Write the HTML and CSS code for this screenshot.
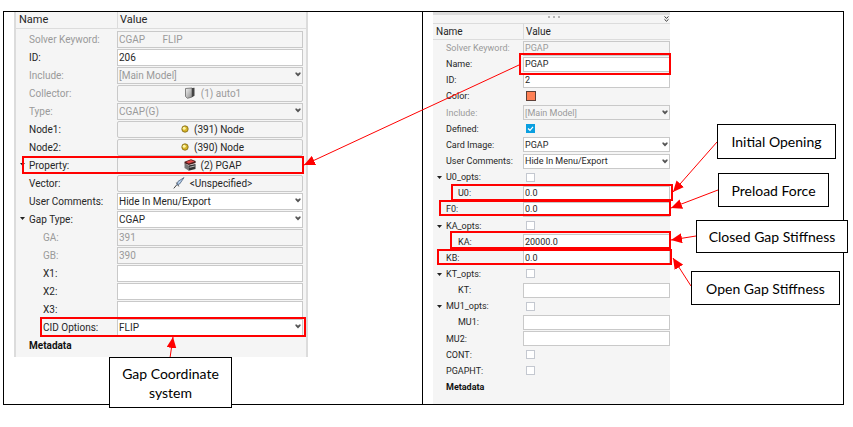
FILE: index.html
```html
<!DOCTYPE html>
<html lang="en">

<head>
    <meta charset="UTF-8">
    <meta name="viewport" content="width=device-width, initial-scale=1.0">
    <title>CGAP / PGAP</title>
    <link rel="stylesheet" href="styles.css">
</head>

<body>
    <!-- shared icons -->
    <svg class="symbols" aria-hidden="true">
        <symbol id="chevron" viewBox="0 0 6 5">
            <path d="M0.4 0.4 H1.8 L3 1.8 L4.2 0.4 H5.6 V1.8 L3 4.6 L0.4 1.8 Z" fill="#555" />
        </symbol>
        <symbol id="caret" viewBox="0 0 5 3">
            <path d="M0 0 H5 L2.5 3 Z" fill="#222" />
        </symbol>
        <symbol id="ball" viewBox="0 0 8 8">
            <circle cx="4" cy="4" r="3.2" fill="#d8b62a" stroke="#7c6414" stroke-width="0.8" />
            <circle cx="3.2" cy="3.2" r="1.5" fill="#fff6a8" />
        </symbol>
    </svg>

    <main class="stage">
        <div class="figure">
            <section class="cell">
                <form class="panel panel-gap">
                    <div class="head"><span>Name</span><span>Value</span></div>
                    <div class="rows">
                        <div class="row off"><label for="g1">Solver Keyword:</label><input id="g1" class="field keyword" value="CGAP       FLIP" disabled></div>
                        <div class="row"><label for="g2">ID:</label><input id="g2" class="field" value="206"></div>
                        <div class="row off"><label for="g3">Include:</label><span class="pick"><select id="g3" class="field" disabled><option>[Main Model]</option></select><svg><use href="#chevron" /></svg></span></div>
                        <div class="row off"><label for="g4">Collector:</label>
                            <button id="g4" type="button" class="field entity" disabled>
                                <svg class="ico" viewBox="0 0 11 12"><defs><linearGradient id="shade" x1="0" y1="0" x2="1" y2="1"><stop offset="0" stop-color="#f4f4f4" /><stop offset="1" stop-color="#8a8a8a" /></linearGradient></defs><path d="M1 1.5 L7.5 1 V10 L3 11.3 L1 9.5 Z" fill="url(#shade)" stroke="#666" stroke-width="0.8" /><path d="M7.5 1 L10 0.8 V8.8 L7.5 10.2 Z" fill="#444" /></svg>(1) auto1</button></div>
                        <div class="row off"><label for="g5">Type:</label><span class="pick"><select id="g5" class="field" disabled><option>CGAP(G)</option></select><svg><use href="#chevron" /></svg></span></div>
                        <div class="row"><label for="g6">Node1:</label><button id="g6" type="button" class="field entity"><svg class="dot"><use href="#ball" /></svg>(391) Node</button></div>
                        <div class="row"><label for="g7">Node2:</label><button id="g7" type="button" class="field entity"><svg class="dot"><use href="#ball" /></svg>(390) Node</button></div>
                        <div class="row"><svg class="caret"><use href="#caret" /></svg><label for="g8">Property:</label>
                            <button id="g8" type="button" class="field entity">
                                <svg class="ico" viewBox="0 0 12 12"><path d="M0.5 4 L4.5 6.5 V11.5 L0.5 9 Z" fill="#777" /><path d="M4.5 6.5 L11.5 5 V10 L4.5 11.7 Z" fill="#333" /><path d="M0.5 2.8 L7 0.3 L11.6 2 L11.6 4 L4.8 6 L0.5 4.2 Z" fill="#4a1c1c" /><path d="M1.8 2.9 L7 1 L10.6 2.4 L4.8 4.4 Z" fill="#e04a48" /><path d="M5.5 8.3 L10.8 7" stroke="#ccc" stroke-width="0.9" /></svg>(2) PGAP</button></div>
                        <div class="row"><label for="g9">Vector:</label>
                            <button id="g9" type="button" class="field entity">
                                <svg class="ico" viewBox="0 0 12 12"><path d="M0.8 11.4 L3.6 8 M3.4 5.6 L5.8 9.4" stroke="#444" stroke-width="1" fill="none" /><path d="M11 0.6 L5 4.4 L3.8 8 L6.8 6.8 Z" fill="#b8d2ee" stroke="#4a5f7c" stroke-width="0.8" /></svg>&lt;Unspecified&gt;</button></div>
                        <div class="row"><label for="g10">User Comments:</label><span class="pick"><select id="g10" class="field"><option>Hide In Menu/Export</option></select><svg><use href="#chevron" /></svg></span></div>
                        <div class="row"><svg class="caret"><use href="#caret" /></svg><label for="g11">Gap Type:</label><span class="pick"><select id="g11" class="field"><option>CGAP</option></select><svg><use href="#chevron" /></svg></span></div>
                        <div class="row sub off"><label for="g12">GA:</label><input id="g12" class="field" value="391" disabled></div>
                        <div class="row sub off"><label for="g13">GB:</label><input id="g13" class="field" value="390" disabled></div>
                        <div class="row sub"><label for="g14">X1:</label><input id="g14" class="field"></div>
                        <div class="row sub"><label for="g15">X2:</label><input id="g15" class="field"></div>
                        <div class="row sub"><label for="g16">X3:</label><input id="g16" class="field"></div>
                        <div class="row sub"><label for="g17">CID Options:</label><span class="pick"><select id="g17" class="field"><option>FLIP</option></select><svg><use href="#chevron" /></svg></span></div>
                        <div class="row"><strong>Metadata</strong></div>
                    </div>
                </form>
            </section>

            <section class="cell">
                <form class="panel panel-prop">
                    <div class="grip">
                        <svg class="grip-dots" viewBox="0 0 14 2"><path d="M1 1 h2 M6 1 h2 M11 1 h2" stroke="#777" stroke-width="1" /></svg>
                        <svg class="grip-more" viewBox="0 0 5 6"><path d="M0.5 0.5 L2.5 2.3 L4.5 0.5 M0.5 3.3 L2.5 5.2 L4.5 3.3" stroke="#333" fill="none" /></svg>
                    </div>
                    <div class="head"><span>Name</span><span>Value</span></div>
                    <div class="rows">
                        <div class="row off"><label for="p1">Solver Keyword:</label><input id="p1" class="field" value="PGAP" disabled></div>
                        <div class="row"><label for="p2">Name:</label><input id="p2" class="field" value="PGAP"></div>
                        <div class="row"><label for="p3">ID:</label><input id="p3" class="field" value="2"></div>
                        <div class="row"><label for="p4">Color:</label><button id="p4" type="button" class="swatch" aria-label="Color"></button></div>
                        <div class="row off"><label for="p5">Include:</label><span class="pick"><select id="p5" class="field" disabled><option>[Main Model]</option></select><svg><use href="#chevron" /></svg></span></div>
                        <div class="row"><label for="p6">Defined:</label><input id="p6" type="checkbox" class="check" checked></div>
                        <div class="row"><label for="p7">Card Image:</label><span class="pick"><select id="p7" class="field"><option>PGAP</option></select><svg><use href="#chevron" /></svg></span></div>
                        <div class="row"><label for="p8">User Comments:</label><span class="pick"><select id="p8" class="field"><option>Hide In Menu/Export</option></select><svg><use href="#chevron" /></svg></span></div>
                        <div class="row"><svg class="caret"><use href="#caret" /></svg><label for="p9">U0_opts:</label><input id="p9" type="checkbox" class="check"></div>
                        <div class="row sub"><label for="p10">U0:</label><input id="p10" class="field" value="0.0"></div>
                        <div class="row"><label for="p11">F0:</label><input id="p11" class="field" value="0.0"></div>
                        <div class="row"><svg class="caret"><use href="#caret" /></svg><label for="p12">KA_opts:</label><input id="p12" type="checkbox" class="check"></div>
                        <div class="row sub"><label for="p13">KA:</label><input id="p13" class="field" value="20000.0"></div>
                        <div class="row"><label for="p14">KB:</label><input id="p14" class="field" value="0.0"></div>
                        <div class="row"><svg class="caret"><use href="#caret" /></svg><label for="p15">KT_opts:</label><input id="p15" type="checkbox" class="check"></div>
                        <div class="row sub"><label for="p16">KT:</label><input id="p16" class="field"></div>
                        <div class="row"><svg class="caret"><use href="#caret" /></svg><label for="p17">MU1_opts:</label><input id="p17" type="checkbox" class="check"></div>
                        <div class="row sub"><label for="p18">MU1:</label><input id="p18" class="field"></div>
                        <div class="row"><label for="p19">MU2:</label><input id="p19" class="field"></div>
                        <div class="row"><label for="p20">CONT:</label><input id="p20" type="checkbox" class="check"></div>
                        <div class="row"><label for="p21">PGAPHT:</label><input id="p21" type="checkbox" class="check"></div>
                        <div class="row"><strong>Metadata</strong></div>
                    </div>
                </form>
            </section>
        </div>

        <!-- red frames and arrows -->
        <svg class="marks" width="853" height="427" viewBox="0 0 853 427" aria-hidden="true">
            <defs>
                <marker id="tip" viewBox="0 0 11 10" refX="11" refY="5" markerWidth="11" markerHeight="10" markerUnits="userSpaceOnUse" orient="auto">
                    <path d="M0 0 L11 5 L0 10 Z" fill="#f00" />
                </marker>
            </defs>
            <g fill="none" stroke="#f00" stroke-width="2">
                <rect x="23" y="157" width="280" height="16" />
                <rect x="41" y="318" width="264" height="18" />
                <rect x="520" y="54" width="150" height="20" />
                <rect x="452" y="185" width="220" height="15" />
                <rect x="440" y="201" width="230" height="14" />
                <rect x="451" y="232" width="219" height="16" />
                <rect x="438" y="250" width="233" height="14" />
            </g>
            <g stroke="#f00" stroke-width="1">
                <path d="M519 65 L304 165" marker-end="url(#tip)" />
                <path d="M170 358 L173 337" marker-end="url(#tip)" />
                <path d="M717 142 L673 192" marker-end="url(#tip)" />
                <path d="M718 190 L671 208" marker-end="url(#tip)" />
                <path d="M696 236 L671 240" marker-end="url(#tip)" />
                <path d="M691 286 L673 258" marker-end="url(#tip)" />
            </g>
        </svg>

        <p class="callout callout-system">Gap Coordinate system</p>
        <p class="callout callout-u0">Initial Opening</p>
        <p class="callout callout-f0">Preload Force</p>
        <p class="callout callout-ka">Closed Gap Stiffness</p>
        <p class="callout callout-kb">Open Gap Stiffness</p>
    </main>
</body>

</html>
```
FILE: styles.css
```css
* {
    box-sizing: border-box;
    margin: 0;
    padding: 0;
}

body {
    background-color: #fff;
    color: #262626;
    font-family: Roboto, "Liberation Sans", Arial, sans-serif;
}

.symbols {
    position: absolute;
    width: 0;
    height: 0;
}

.stage {
    position: relative;
    padding: 11px 9px 20px 3px;
}

.figure {
    display: grid;
    grid-template-columns: 419px 1fr;
    min-height: 394px;
    border: 1px solid #000;
}

.cell {
    display: flex;
    align-items: flex-start;
    padding: 0 10px;
}

.cell:first-child {
    border-right: 1px solid #000;
}

/* property panels */
.panel {
    background-color: #f5f5f5;
}

.panel-gap {
    width: 294px;
    border: solid #dcdcdc;
    border-width: 0 2px;
    font-size: 10px;
}

.panel-prop {
    display: flex;
    flex-direction: column;
    align-self: stretch;
    width: 237px;
    font-size: 9px;
}

.head,
.row {
    display: grid;
    align-items: center;
}

.head {
    border-bottom: 1px solid #dcdcdc;
}

.head span {
    padding-left: 3px;
}

.head span + span {
    padding-left: 2px;
    border-left: 1px solid #dcdcdc;
}

.panel-gap .head,
.panel-gap .row {
    grid-template-columns: 101px 1fr;
}

.panel-prop .head,
.panel-prop .row {
    grid-template-columns: 90px 1fr;
}

.panel-gap .head {
    font-size: 11px;
    line-height: 16px;
}

.panel-prop .head {
    font-size: 10px;
    line-height: 15px;
    border-top: 1px solid #dcdcdc;
}

.rows {
    display: grid;
    grid-auto-rows: 1fr;
}

.panel-gap .rows {
    padding: 1px 3px 3px 0;
}

.panel-prop .rows {
    flex: 1;
    padding-bottom: 9px;
}

.row {
    position: relative;
}

.panel-gap .row {
    height: 18px;
}

.row label,
.row strong {
    padding-left: 13px;
    white-space: nowrap;
}

.row strong {
    color: #111;
}

.panel-gap .sub label {
    padding-left: 27px;
}

.panel-prop .sub label {
    padding-left: 25px;
}

.off,
.off .field {
    color: #9a9a9a;
}

.field {
    display: block;
    width: 100%;
    height: 17px;
    padding: 0 1px;
    border: 1px solid #c9c9c9;
    border-radius: 0;
    background-color: #fff;
    color: #262626;
    font: inherit;
    appearance: none;
    opacity: 1;
}

.panel-prop .field {
    width: 147px;
    height: 15px;
}

.off .field,
.entity {
    background-color: #f5f5f5;
}

.keyword {
    white-space: pre;
}

.pick {
    position: relative;
}

.pick svg {
    position: absolute;
    top: 5px;
    right: 2px;
    width: 6px;
    height: 5px;
}

.entity {
    display: flex;
    align-items: center;
    justify-content: center;
    gap: 5px;
    padding-left: 6px;
    border-radius: 2px;
}

.ico {
    width: 12px;
    height: 12px;
}

.dot {
    width: 8px;
    height: 8px;
}

.caret {
    position: absolute;
    top: 7px;
    left: 4px;
    width: 5px;
    height: 3px;
}

.swatch {
    width: 10px;
    height: 10px;
    margin-left: 3px;
    border: 1px solid #5c4038;
    background-color: #ff8055;
}

.check {
    width: 9px;
    height: 9px;
    margin-left: 3px;
    border: 1px solid #c4c8d0;
    background-color: #fff;
    appearance: none;
}

.check:checked {
    border-color: #0a9fe0;
    background: #0a9fe0 url("data:image/svg+xml,%3Csvg xmlns='http://www.w3.org/2000/svg' viewBox='0 0 7 7'%3E%3Cpath d='M1 3.5L3 5.3L6 1.8' fill='none' stroke='white' stroke-width='1.2'/%3E%3C/svg%3E");
}

/* drag handle above the header */
.grip {
    position: relative;
    height: 11px;
    border-top: 3px solid #dcdcdc;
}

.grip-dots {
    position: absolute;
    top: 1px;
    left: 114px;
    width: 14px;
    height: 2px;
}

.grip-more {
    position: absolute;
    top: 1px;
    right: 1px;
    width: 5px;
    height: 6px;
}

/* notes laid over the figure */
.marks {
    position: absolute;
    top: 0;
    left: 0;
    pointer-events: none;
}

.callout {
    position: absolute;
    display: flex;
    align-items: center;
    justify-content: center;
    border: 1px solid #000;
    background-color: #fff;
    color: #000;
    font-family: Lato, Calibri, sans-serif;
    font-size: 14px;
    line-height: 19px;
    text-align: center;
}

.callout-system {
    top: 357px;
    left: 109px;
    width: 123px;
    height: 51px;
    padding: 0 10px;
}

.callout-u0 {
    top: 124px;
    left: 717px;
    width: 119px;
    height: 35px;
}

.callout-f0 {
    top: 173px;
    left: 718px;
    width: 111px;
    height: 34px;
}

.callout-ka {
    top: 220px;
    left: 696px;
    width: 152px;
    height: 33px;
}

.callout-kb {
    top: 271px;
    left: 691px;
    width: 149px;
    height: 34px;
}
```
